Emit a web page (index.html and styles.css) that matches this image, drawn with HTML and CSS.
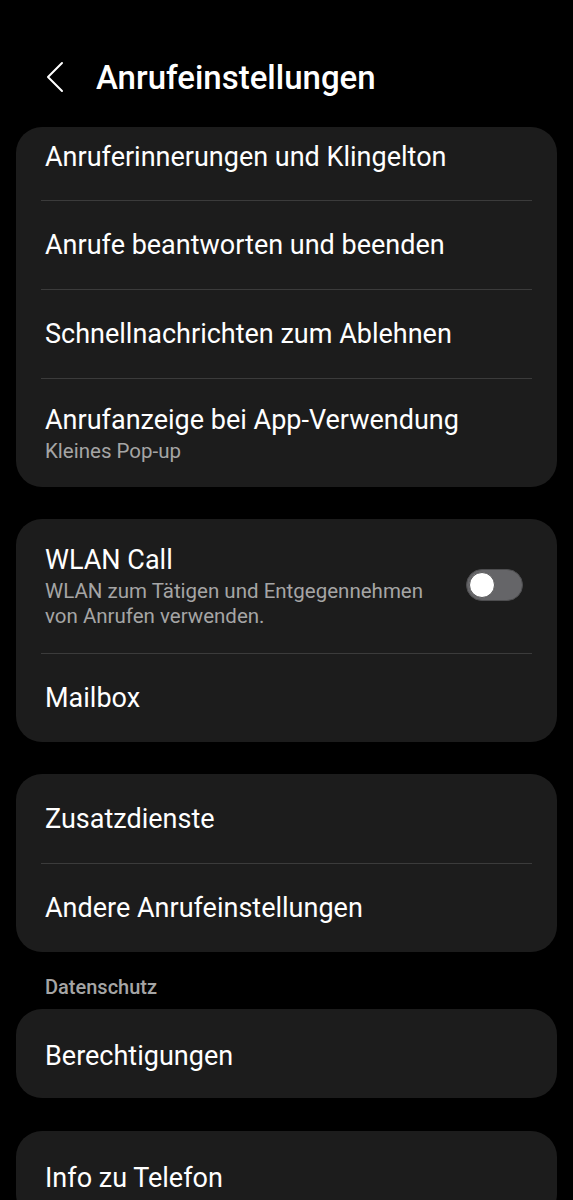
FILE: index.html
```html
<!DOCTYPE html>
<html lang="de">
<head>
    <meta charset="UTF-8">
    <meta name="viewport" content="width=device-width, initial-scale=1.0">
    <title>Anrufeinstellungen</title>
    <link rel="stylesheet" href="styles.css">
</head>
<body>
    <div class="page">
        <div class="header">
            <button class="back-btn" aria-label="Zurück">
                <svg width="18" height="32" viewBox="0 0 18 32">
                    <polyline points="16,2 2,16 16,30" fill="none" stroke="#fff" stroke-width="2" stroke-linecap="round" stroke-linejoin="round"/>
                </svg>
            </button>
            <h1>Anrufeinstellungen</h1>
        </div>

        <!-- Group 1 -->
        <div class="card">
            <div class="row first">
                <div class="title">Anruferinnerungen und Klingelton</div>
            </div>
            <div class="row">
                <div class="title">Anrufe beantworten und beenden</div>
            </div>
            <div class="row">
                <div class="title">Schnellnachrichten zum Ablehnen</div>
            </div>
            <div class="row sub-row">
                <div class="title">Anrufanzeige bei App-Verwendung</div>
                <div class="subtitle">Kleines Pop-up</div>
            </div>
        </div>

        <!-- Group 2 -->
        <div class="card">
            <div class="row switch-row">
                <div class="texts">
                    <div class="title">WLAN Call</div>
                    <div class="subtitle">WLAN zum Tätigen und Entgegennehmen von Anrufen verwenden.</div>
                </div>
                <div class="toggle"><span class="thumb"></span></div>
            </div>
            <div class="row">
                <div class="title">Mailbox</div>
            </div>
        </div>

        <!-- Group 3 -->
        <div class="card">
            <div class="row">
                <div class="title">Zusatzdienste</div>
            </div>
            <div class="row">
                <div class="title">Andere Anrufeinstellungen</div>
            </div>
        </div>

        <div class="section-label">Datenschutz</div>
        <div class="card single">
            <div class="row">
                <div class="title">Berechtigungen</div>
            </div>
        </div>

        <div class="card single last">
            <div class="row">
                <div class="title">Info zu Telefon</div>
            </div>
        </div>
    </div>
</body>
</html>
```

FILE: styles.css
```css
/* General Page Styling */
body {
    margin: 0;
    padding: 0;
    background: #000000;
    color: #ffffff;
    font-family: 'Roboto', 'Noto Sans', sans-serif;
    overflow: hidden;
}

.page {
    padding: 0 16px;
    height: 1200px;
}

/* Header */
.header {
    display: flex;
    align-items: center;
    height: 62px;
    padding-top: 46px;
    padding-bottom: 19px;
}

.back-btn {
    background: none;
    border: none;
    padding: 0;
    margin-left: 30px;
    width: 18px;
    height: 32px;
    display: flex;
}

h1 {
    margin: 0 0 0 32px;
    font-size: 33px;
    font-weight: 500;
}

/* Cards */
.card {
    background: #1c1c1c;
    border-radius: 26px;
    padding: 0 25px 0 29px;
    margin-bottom: 32px;
}

.row {
    min-height: 89px;
    display: flex;
    flex-direction: column;
    justify-content: center;
    border-top: 1px solid #3b3b3b;
    margin-left: -4px;
    padding-left: 4px;
    box-sizing: border-box;
}

.row:first-child {
    border-top: none;
}

.row.first {
    min-height: 73px;
    justify-content: flex-end;
    padding-bottom: 28px;
}

.title {
    font-size: 27px;
    line-height: 30px;
}

.subtitle {
    font-size: 20.5px;
    line-height: 25px;
    color: #a5a5a5;
    margin-top: 4px;
}

.sub-row {
    min-height: 109px;
    justify-content: flex-start;
    padding-top: 26px;
}

/* Switch row */
.switch-row {
    flex-direction: row;
    align-items: flex-start;
    justify-content: space-between;
    min-height: 134px;
    padding-top: 26px;
}

.switch-row .subtitle {
    width: 400px;
}

.toggle {
    width: 55px;
    height: 30px;
    border-radius: 16px;
    background: #656568;
    border: 1px solid #4d4d4f;
    position: relative;
    margin-right: 9px;
    margin-top: 24px;
    flex-shrink: 0;
}

.toggle .thumb {
    position: absolute;
    left: 2px;
    top: 2px;
    width: 24px;
    height: 24px;
    border-radius: 50%;
    background: #ffffff;
    border: 1px solid #59595b;
}

/* Section label */
.section-label {
    font-size: 20px;
    color: #a5a5a5;
    padding-left: 29px;
    margin-top: -9px;
    margin-bottom: 10px;
    font-weight: 500;
}

.card.single .row {
    padding-top: 4px;
}

.card.last {
    margin-top: 33px;
}
```
